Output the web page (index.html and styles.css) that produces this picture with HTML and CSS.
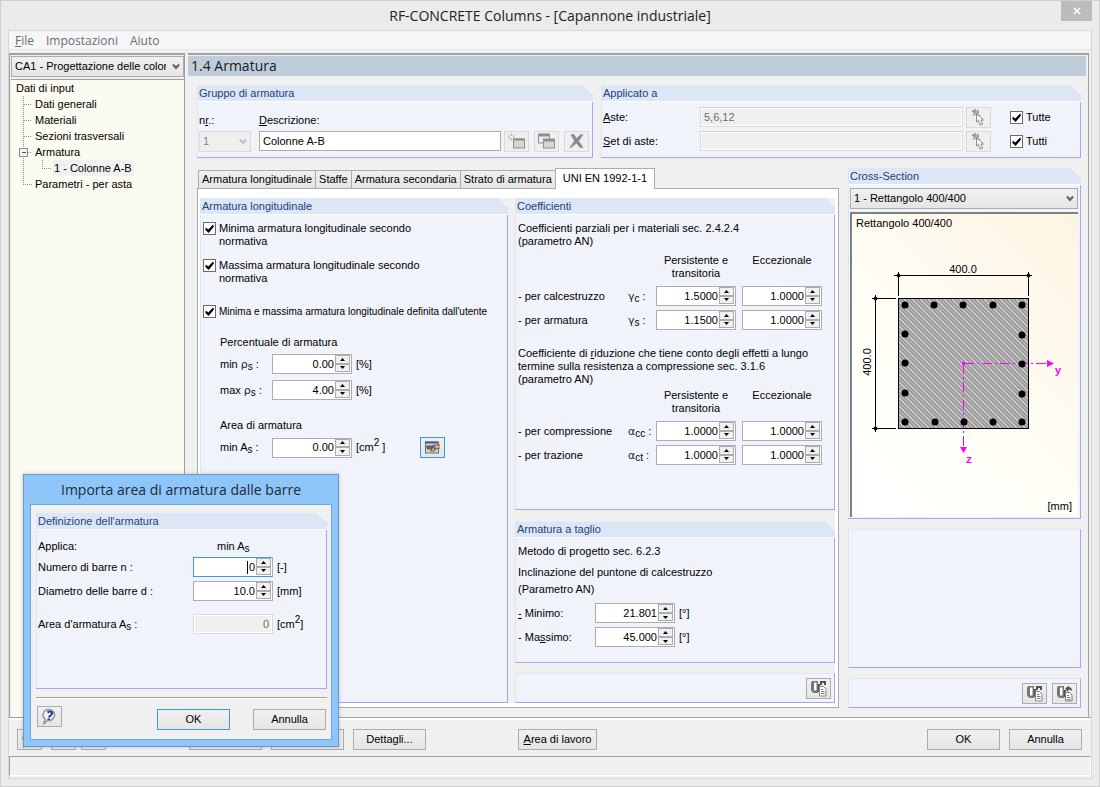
FILE: index.html
```html
<!DOCTYPE html>
<html lang="it">
<head>
<meta charset="utf-8">
<title>RF-CONCRETE Columns</title>
<link rel="stylesheet" href="styles.css">
</head>
<body>
<svg class="defs" aria-hidden="true">
  <symbol id="chevron" viewBox="0 0 8 7"><path d="M1 1.500 4 5l3-3.500" fill="none" stroke="currentColor" stroke-width="2"/></symbol>
  <symbol id="up" viewBox="0 0 5 3"><path d="M0 3 2.500 0 5 3Z"/></symbol>
  <symbol id="down" viewBox="0 0 5 3"><path d="M0 0 2.500 3 5 0Z"/></symbol>
  <symbol id="pick" viewBox="0 0 17 17">
    <path d="M2 2l8 5M3 6l6-3M2 2h7M5 0v6" stroke="#9c9c9c" stroke-width="1.500" fill="none"/>
    <path d="M6.500 4.500v8.500l2-1.500 1.500 4.500 2.500-1-1.500-4h2.500Z" fill="#f4f4f4" stroke="#8c8c8c"/>
  </symbol>
  <symbol id="sheet-import" viewBox="0 0 17 17">
    <path d="M2 1h6v12H4Q1 12 1 9V4Q1 2 2 1Z" fill="#77776f"/>
    <path d="M4 2.500h2.500v8H4Z" fill="#fff"/>
    <path d="M9 12V4M11 5V2h4v3" fill="none" stroke="#55524a" stroke-width="2"/>
    <path d="M9.500 6.500h4l2.500 2.500v7H9.500Z" fill="#fff" stroke="#8a8584"/>
    <path d="M11 9.500h2M11 11.500h3.500M11 13.500h3.500" stroke="#777"/>
  </symbol>
  <symbol id="sheet-export" viewBox="0 0 17 17">
    <path d="M2 1h6v12H4Q1 12 1 9V4Q1 2 2 1Z" fill="#77776f"/>
    <path d="M4 2.500h2.500v8H4Z" fill="#fff"/>
    <path d="M9 12V5" stroke="#55524a" stroke-width="2"/>
    <path d="M9 4l3.500-3.500V2q3.500 0 3.500 4-1-1.500-3.500-1.500V7Z" fill="#55524a"/>
    <path d="M9.500 7.500h4l2.500 2.500v6H9.500Z" fill="#fff" stroke="#8a7477"/>
    <path d="M11 10.500h2M11 12.500h3.500M11 14.500h3.500" stroke="#777"/>
  </symbol>
  <symbol id="help" viewBox="0 0 17 17">
    <path d="M8.500 1.500a6 5.500 0 1 1-2 11L3 15.500l1-4.500A6 5.500 0 0 1 8.500 1.500Z" fill="#eef2f8" stroke="#8d9299" stroke-width="1.500"/>
    <path d="M6.500 4.500q2-1.500 4-.5 1.500 1-.5 3-1.500 1-2 2.500" fill="none" stroke="#2c3a96" stroke-width="2"/>
    <path d="M6.500 10.500h2.500v1.500H6.500Z" fill="#2c3a96"/>
  </symbol>
</svg>

<div class="window">
  <header class="titlebar">
    <h1>RF-CONCRETE Columns - [Capannone industriale]</h1>
    <button class="close" aria-label="Chiudi"><svg viewBox="0 0 8 8"><path d="M1 1l6 6M7 1 1 7" stroke="#fff" stroke-width="1.500"/></svg></button>
  </header>

  <div class="client">
    <nav class="menubar">
      <button><u>F</u>ile</button><button>Impostazioni</button><button>Aiuto</button>
    </nav>

    <div class="panes">
      <aside class="sidebar">
        <div class="select">
          <select aria-label="Caso"><option>CA1 - Progettazione delle colonne</option></select>
          <svg class="chev"><use href="#chevron"/></svg>
        </div>
        <ul class="tree">
          <li><span class="leaf">Dati di input</span></li>
          <li><svg class="branch"><path d="M.5 0V16M.5 8.500H9"/></svg><span class="leaf">Dati generali</span></li>
          <li><svg class="branch"><path d="M.5 0V16M.5 8.500H9"/></svg><span class="leaf">Materiali</span></li>
          <li><svg class="branch"><path d="M.5 0V16M.5 8.500H9"/></svg><span class="leaf">Sezioni trasversali</span></li>
          <li><svg class="branch"><path d="M.5 0V16M.5 8.500H9"/><rect x="-3.500" y="4.500" width="8" height="8" rx="1"/><path class="minus" d="M-1.500 8.500h4"/></svg><span class="leaf">Armatura</span></li>
          <li><svg class="branch deep"><path d="M.5 0V16M19.500 0V8.500H28"/></svg><span class="leaf selected">1 - Colonne A-B</span></li>
          <li><svg class="branch"><path d="M.5 0V8.500H9"/></svg><span class="leaf">Parametri - per asta</span></li>
        </ul>
      </aside>

      <main class="main">
        <h2 class="page-title">1.4 Armatura</h2>
        <div class="content">
          <div class="top">
            <section class="group">
              <h3>Gruppo di armatura</h3>
              <div class="set-form">
                <label for="nr">n<u>r</u>.:</label>
                <label class="desc-label" for="desc"><u>D</u>escrizione:</label>
                <div class="select off set-nr">
                  <select id="nr" disabled><option>1</option></select>
                  <svg class="chev"><use href="#chevron"/></svg>
                </div>
                <input id="desc" class="field" type="text" value="Colonne A-B">
                <div class="set-tools">
                  <button class="tool off" aria-label="Nuovo"><svg viewBox="0 0 17 16"><rect x="5.500" y="5.500" width="11" height="9" fill="#d6d6d6" stroke="#8e8e8e"/><path d="M5 6h12" stroke="#8e8e8e" stroke-width="2"/><path d="M3.500 0v7M0 3.500h7M1 1l5 5M6 1 1 6" stroke="#b0b0b0"/><circle cx="3.500" cy="3.500" r="1.500" fill="#f4f4f4"/></svg></button>
                  <button class="tool off" aria-label="Copia"><svg viewBox="0 0 17 16"><rect x=".5" y="1.500" width="11" height="8" fill="#eee" stroke="#8e8e8e"/><path d="M0 1.500h12" stroke="#8e8e8e" stroke-width="3"/><rect x="5.500" y="6.500" width="11" height="8" fill="#d6d6d6" stroke="#8e8e8e"/><path d="M5 6.500h12" stroke="#8e8e8e" stroke-width="3"/></svg></button>
                  <button class="tool off" aria-label="Elimina"><svg viewBox="0 0 17 16"><path d="M3 1l3 0 2.500 4L13 1h2l-4.500 6.500L15 14h-3L8.500 9.500 3 14H2l4.500-6.500Z" fill="#858585" stroke="#a0a0a0"/></svg></button>
                </div>
              </div>
            </section>

            <section class="group">
              <h3>Applicato a</h3>
              <div class="apply-form">
                <label for="aste"><u>A</u>ste:</label>
                <input id="aste" class="field off" type="text" value="5,6,12" disabled>
                <button class="tool off" aria-label="Seleziona aste"><svg><use href="#pick"/></svg></button>
                <label class="check"><input type="checkbox" checked><span>Tutte</span></label>
                <label for="sets"><u>S</u>et di aste:</label>
                <input id="sets" class="field off" type="text" disabled>
                <button class="tool off" aria-label="Seleziona set di aste"><svg><use href="#pick"/></svg></button>
                <label class="check"><input type="checkbox" checked><span>Tutti</span></label>
              </div>
            </section>
          </div>

          <div class="work">
            <div class="tabs">
              <div class="tablist" role="tablist">
                <button role="tab">Armatura longitudinale</button><button role="tab">Staffe</button><button role="tab">Armatura secondaria</button><button role="tab">Strato di armatura</button><button role="tab" class="active" aria-selected="true">UNI EN 1992-1-1</button>
              </div>
              <div class="tabpage">
                <div class="tabgrid">
                  <section class="group">
                    <h3>Armatura longitudinale</h3>
                    <div class="body">
                      <label class="check narrow"><input type="checkbox" checked><span>Minima armatura longitudinale secondo normativa</span></label>
                      <label class="check narrow second"><input type="checkbox" checked><span>Massima armatura longitudinale secondo normativa</span></label>
                      <label class="check third"><input type="checkbox" checked><span>Minima e massima armatura longitudinale definita dall'utente</span></label>
                      <div class="limits">
                        <p>Percentuale di armatura</p>
                        <div class="row">
                          <label for="minr">min <i>ρ</i><sub>s</sub> :</label>
                          <span class="spin"><input id="minr" type="text" value="0.00"><span class="steps"><button aria-label="Aumenta"><svg><use href="#up"/></svg></button><button aria-label="Riduci"><svg><use href="#down"/></svg></button></span></span>
                          <span>[%]</span>
                        </div>
                        <div class="row">
                          <label for="maxr">max <i>ρ</i><sub>s</sub> :</label>
                          <span class="spin"><input id="maxr" type="text" value="4.00"><span class="steps"><button aria-label="Aumenta"><svg><use href="#up"/></svg></button><button aria-label="Riduci"><svg><use href="#down"/></svg></button></span></span>
                          <span>[%]</span>
                        </div>
                        <p class="area">Area di armatura</p>
                        <div class="row">
                          <label for="mina">min A<sub>s</sub> :</label>
                          <span class="spin"><input id="mina" type="text" value="0.00"><span class="steps"><button aria-label="Aumenta"><svg><use href="#up"/></svg></button><button aria-label="Riduci"><svg><use href="#down"/></svg></button></span></span>
                          <span>[cm<sup>2</sup> ]</span>
                          <button class="tool focus" aria-label="Importa area dalle barre"><svg viewBox="0 0 17 16"><rect x="1.500" y="2.500" width="13" height="11" fill="#d5d3cc" stroke="#6f6f6f"/><path d="M1 3h13" stroke="#3a5fae" stroke-width="2"/><path d="M2 6h6l2-1h6v4l-4 1-2 2H6l1-2H3Z" fill="#6b6259"/><path d="M10 6h6v2l-4 1Z" fill="#d8ad8c"/><circle cx="9" cy="10" r="1" fill="#ddd"/></svg></button>
                        </div>
                      </div>
                    </div>
                  </section>

                  <div class="stack">
                    <section class="group coef">
                      <h3>Coefficienti</h3>
                      <div class="body">
                        <p>Coefficienti parziali per i materiali sec. 2.4.2.4<br>(parametro AN)</p>
                        <div class="matrix">
                          <span class="head first">Persistente e transitoria</span><span class="head">Eccezionale</span>
                          <span>- per calcestruzzo</span><span><i>γ</i><sub>c</sub> :</span>
                          <span class="spin"><input aria-label="Calcestruzzo persistente" type="text" value="1.5000"><span class="steps"><button aria-label="Aumenta"><svg><use href="#up"/></svg></button><button aria-label="Riduci"><svg><use href="#down"/></svg></button></span></span>
                          <span class="spin"><input aria-label="Calcestruzzo eccezionale" type="text" value="1.0000"><span class="steps"><button aria-label="Aumenta"><svg><use href="#up"/></svg></button><button aria-label="Riduci"><svg><use href="#down"/></svg></button></span></span>
                          <span>- per armatura</span><span><i>γ</i><sub>s</sub> :</span>
                          <span class="spin"><input aria-label="Armatura persistente" type="text" value="1.1500"><span class="steps"><button aria-label="Aumenta"><svg><use href="#up"/></svg></button><button aria-label="Riduci"><svg><use href="#down"/></svg></button></span></span>
                          <span class="spin"><input aria-label="Armatura eccezionale" type="text" value="1.0000"><span class="steps"><button aria-label="Aumenta"><svg><use href="#up"/></svg></button><button aria-label="Riduci"><svg><use href="#down"/></svg></button></span></span>
                        </div>
                        <p class="reduction">Coefficiente di <u>r</u>iduzione che tiene conto degli effetti a lungo<br>termine sulla resistenza a compressione sec. 3.1.6<br>(parametro AN)</p>
                        <div class="matrix tight">
                          <span class="head first">Persistente e transitoria</span><span class="head">Eccezionale</span>
                          <span>- per compressione</span><span><i>α</i><sub>cc</sub> :</span>
                          <span class="spin"><input aria-label="Compressione persistente" type="text" value="1.0000"><span class="steps"><button aria-label="Aumenta"><svg><use href="#up"/></svg></button><button aria-label="Riduci"><svg><use href="#down"/></svg></button></span></span>
                          <span class="spin"><input aria-label="Compressione eccezionale" type="text" value="1.0000"><span class="steps"><button aria-label="Aumenta"><svg><use href="#up"/></svg></button><button aria-label="Riduci"><svg><use href="#down"/></svg></button></span></span>
                          <span>- per trazione</span><span><i>α</i><sub>ct</sub> :</span>
                          <span class="spin"><input aria-label="Trazione persistente" type="text" value="1.0000"><span class="steps"><button aria-label="Aumenta"><svg><use href="#up"/></svg></button><button aria-label="Riduci"><svg><use href="#down"/></svg></button></span></span>
                          <span class="spin"><input aria-label="Trazione eccezionale" type="text" value="1.0000"><span class="steps"><button aria-label="Aumenta"><svg><use href="#up"/></svg></button><button aria-label="Riduci"><svg><use href="#down"/></svg></button></span></span>
                        </div>
                      </div>
                    </section>

                    <section class="group shear">
                      <h3>Armatura a taglio</h3>
                      <div class="body">
                        <p>Metodo di progetto sec. 6.2.3</p>
                        <p class="strut">Inclinazione del puntone di calcestruzzo</p>
                        <p class="param">(Parametro AN)</p>
                        <div class="row">
                          <label for="amin"><u>-</u> Minimo:</label>
                          <span class="spin"><input id="amin" type="text" value="21.801"><span class="steps"><button aria-label="Aumenta"><svg><use href="#up"/></svg></button><button aria-label="Riduci"><svg><use href="#down"/></svg></button></span></span>
                          <span>[°]</span>
                        </div>
                        <div class="row">
                          <label for="amax">- Ma<u>s</u>simo:</label>
                          <span class="spin"><input id="amax" type="text" value="45.000"><span class="steps"><button aria-label="Aumenta"><svg><use href="#up"/></svg></button><button aria-label="Riduci"><svg><use href="#down"/></svg></button></span></span>
                          <span>[°]</span>
                        </div>
                      </div>
                    </section>

                    <div class="strip">
                      <button class="tool" aria-label="Imposta valori"><svg><use href="#sheet-import"/></svg></button>
                    </div>
                  </div>
                </div>
              </div>
            </div>

            <div class="side">
              <section class="group section-box">
                <h3>Cross-Section</h3>
                <div class="section-body">
                  <div class="select">
                    <select aria-label="Sezione"><option>1 - Rettangolo 400/400</option></select>
                    <svg class="chev"><use href="#chevron"/></svg>
                  </div>
                  <div class="canvas">
                    <span>Rettangolo 400/400</span>
                    <svg class="drawing" viewBox="1 0 226 270">
                      <defs>
                        <pattern id="hatch" width="8" height="8" patternUnits="userSpaceOnUse">
                          <rect width="8" height="8" fill="#9b9b9b"/>
                          <path d="M-1-1l10 10M-1 7l2 2M7-1l2 2" stroke="#dcdcdc" stroke-width="1.200"/>
                          <path d="M-1 3l6 6M3-1l6 6" stroke="#d0d0d0" stroke-width=".8"/>
                        </pattern>
                      </defs>
                      <rect x="47.500" y="68.500" width="130" height="130" fill="url(#hatch)" stroke="#000"/>
                      <path d="M43 45.500h138M47.500 42v24M177.500 42v24M24.500 65v137M21 68.500h24M21 198.500h24" stroke="#000" fill="none"/>
                      <path d="M45 45.500l2.500-2.500 2.500 2.500-2.500 2.500ZM175 45.500l2.500-2.500 2.500 2.500-2.500 2.500ZM22 68.500l2.500-2.500 2.500 2.500-2.500 2.500ZM22 198.500l2.500-2.500 2.500 2.500-2.500 2.500Z"/>
                      <path class="axis-line" d="M112.500 133.500H200M112.500 133.500V220"/>
                      <path d="M196 130l7 3.500-7 3.500ZM109 217h7l-3.500 6ZM111 132h3v3h-3Z" fill="#f0f"/>
                      <g>
                        <circle cx="54" cy="75" r="3.500"/><circle cx="83" cy="75" r="3.500"/><circle cx="112" cy="75" r="3.500"/><circle cx="142" cy="75" r="3.500"/><circle cx="171" cy="75" r="3.500"/>
                        <circle cx="54" cy="104" r="3.500"/><circle cx="54" cy="133" r="3.500"/><circle cx="54" cy="163" r="3.500"/>
                        <circle cx="171" cy="105" r="3.500"/><circle cx="171" cy="134" r="3.500"/><circle cx="171" cy="164" r="3.500"/>
                        <circle cx="54" cy="192" r="3.500"/><circle cx="84" cy="192" r="3.500"/><circle cx="113" cy="192" r="3.500"/><circle cx="142" cy="192" r="3.500"/><circle cx="171" cy="192" r="3.500"/>
                      </g>
                      <text x="112" y="43" text-anchor="middle">400.0</text>
                      <text transform="translate(20 132) rotate(-90)" text-anchor="middle">400.0</text>
                      <text class="axis" x="207" y="144" text-anchor="middle">y</text>
                      <text class="axis" x="118" y="233" text-anchor="middle">z</text>
                    </svg>
                    <span class="unit">[mm]</span>
                  </div>
                </div>
              </section>
              <div class="strip blank"></div>
              <div class="strip">
                <button class="tool" aria-label="Importa"><svg><use href="#sheet-import"/></svg></button>
                <button class="tool" aria-label="Esporta"><svg><use href="#sheet-export"/></svg></button>
              </div>
            </div>
          </div>
        </div>
      </main>
    </div>

    <footer class="actions">
      <button class="tool" aria-label="Aiuto"><svg><use href="#help"/></svg></button>
      <button class="tool" aria-label="Precedente"></button>
      <button class="tool" aria-label="Successivo"></button>
      <button class="push calc" aria-label="Calcola"></button>
      <button class="push" aria-label="Verifica"></button>
      <button class="push">Dettagli...</button>
      <button class="push area-btn"><u>A</u>rea di lavoro</button>
      <span class="fill"></span>
      <button class="push">OK</button>
      <button class="push">Annulla</button>
    </footer>
    <div class="statusbar"></div>
  </div>

  <div class="dialog" role="dialog" aria-labelledby="dlg-title">
    <h2 id="dlg-title">Importa area di armatura dalle barre</h2>
    <div class="dialog-body">
      <section class="group">
        <h3>Definizione dell'armatura</h3>
        <div class="bars">
          <span>Applica:</span><span class="target">min A<sub>s</sub></span>
          <label class="start" for="num">Numero di barre n :</label>
          <span class="spin focus"><input id="num" type="text" value="0"><span class="steps"><button aria-label="Aumenta"><svg><use href="#up"/></svg></button><button aria-label="Riduci"><svg><use href="#down"/></svg></button></span></span>
          <span class="units">[-]</span>
          <label class="start" for="dia">Diametro delle barre d :</label>
          <span class="spin"><input id="dia" type="text" value="10.0"><span class="steps"><button aria-label="Aumenta"><svg><use href="#up"/></svg></button><button aria-label="Riduci"><svg><use href="#down"/></svg></button></span></span>
          <span class="units">[mm]</span>
          <label class="start result" for="tot">Area d'armatura A<sub>s</sub> :</label>
          <input id="tot" class="field off total result" type="text" value="0" disabled>
          <span class="units result">[cm<sup>2</sup>]</span>
        </div>
      </section>
      <div class="dialog-actions">
        <button class="tool" aria-label="Aiuto"><svg><use href="#help"/></svg></button>
        <span class="fill"></span>
        <button class="push focus">OK</button>
        <button class="push">Annulla</button>
      </div>
    </div>
  </div>
</div>
</body>
</html>
```
FILE: styles.css
```css
* { box-sizing: border-box; }
body {
  margin: 0;
  font: 11px/13px "Liberation Sans", Arial, sans-serif;
  color: #000;
  background: #ebebeb;
}
h1, h2, h3, p, ul { margin: 0; padding: 0; font-weight: normal; }
button, input, select { font: inherit; color: inherit; margin: 0; }
button { padding: 0; }
i { font-family: "DejaVu Sans", sans-serif; font-style: normal; color: #223; }
sub, sup { font-size: 10px; line-height: 0; }
sub { vertical-align: -2px; }
svg { display: block; }
.defs { position: absolute; width: 0; height: 0; }

.window {
  position: relative;
  display: flex;
  flex-direction: column;
  min-height: 100vh;
  padding: 0 7px 7px;
  border: 1px solid #cfcfcf;
  background: #ebebeb;
}
.titlebar {
  display: grid;
  grid-template-columns: 31px 1fr 31px;
  height: 29px;
}
.titlebar h1 {
  grid-column: 2;
  text-align: center;
  font: 14px/29px "Open Sans", sans-serif;
  color: #222;
}
.close {
  display: grid;
  place-items: center;
  height: 20px;
  border: 0;
  background: #bcbcba;
}
.close svg { width: 8px; height: 8px; }

.client {
  flex: 1;
  display: flex;
  flex-direction: column;
  border: 1px solid #d6d6d6;
  background: #f0f0f0;
}
.menubar {
  display: flex;
  gap: 12px;
  height: 19px;
  padding-left: 6px;
  background: #f5f6f7;
  border-bottom: 1px solid #e8e8e8;
}
.menubar button {
  border: 0;
  background: none;
  font: 12px/20px "Open Sans", sans-serif;
  color: #6d6d6d;
}

.panes {
  flex: 1;
  display: flex;
  gap: 3px;
  margin-top: 3px;
  border-bottom: 1px solid #a0a0a0;
  box-shadow: 0 2px #fff;
}
.sidebar {
  display: flex;
  flex-direction: column;
  gap: 2px;
  width: 176px;
  padding: 1px 0 0 1px;
  border: 1px solid #a0a0a0;
  border-bottom: 0;
  border-top-width: 2px;
}
.tree {
  flex: 1;
  list-style: none;
  padding-left: 5px;
  border-top: 1px solid #a0a0a0;
  background: #fcfbf2;
}
.tree li { display: flex; height: 16px; line-height: 16px; }
.branch {
  width: 11px;
  height: 16px;
  margin-left: 7px;
  overflow: visible;
  fill: none;
  stroke: #909090;
  stroke-dasharray: 1 1;
  shape-rendering: crispEdges;
}
.branch.deep { width: 30px; }
.branch rect { fill: #f4f4f4; stroke: #8c8c8c; stroke-dasharray: none; }
.branch .minus { stroke: #3355a5; stroke-dasharray: none; }
.leaf { padding-right: 2px; }
.branch + .leaf { padding-left: 1px; }
.leaf.selected { background: #f0f0f0; }

.select { position: relative; height: 21px; }
.select select {
  display: block;
  width: 100%;
  height: 100%;
  padding: 0 17px 0 3px;
  border: 1px solid #acacac;
  border-radius: 0;
  background: linear-gradient(#f0f0f0, #e5e5e5);
  appearance: none;
  overflow: hidden;
}
.select.off select { color: #838383; background: #efefef; border-color: #d9d9d9; opacity: 1; }
.chev { position: absolute; right: 4px; top: 7px; width: 8px; height: 7px; color: #606060; pointer-events: none; }
.off .chev { color: #bfbfbf; }

.main {
  flex: 1;
  min-width: 0;
  display: flex;
  flex-direction: column;
  margin-right: 2px;
  padding: 1px 2px 0 0;
  border-top: 2px solid #a0a0a0;
  border-right: 1px solid #a0a0a0;
}
.page-title {
  padding-left: 3px;
  font: 14px/20px "Open Sans", sans-serif;
  color: #1a1a22;
  background: #bfcddb;
}
.content {
  flex: 1;
  display: flex;
  flex-direction: column;
  gap: 10px;
  padding: 9px 5px 9px 9px;
}
.top { display: grid; grid-template-columns: 396fr 480fr; gap: 8px; }

.group {
  display: flex;
  flex-direction: column;
  border: solid #a6a6ee;
  border-width: 0 1px 1px 0;
  background: #f0f4fa;
  box-shadow: inset 1px 0 #dce6f5;
  clip-path: polygon(0 0, calc(100% - 10px) 0, 100% 10px, 100% 100%, 0 100%);
}
.group h3 {
  margin-right: -1px;
  clip-path: polygon(0 0, calc(100% - 10px) 0, 100% 10px, 100% 100%, 0 100%);
  padding-left: 2px;
  font: 11px/16px "Liberation Sans", Arial, sans-serif;
  color: #1f3f7a;
  background: #dce6f5;
  border-bottom: 1px solid #fff;
}

.field {
  min-width: 0;
  width: 100%;
  height: 20px;
  padding: 0 3px;
  border: 1px solid #abadb3;
  background: #fff;
}
.field.off { color: #6d6d6d; border-color: #d9d9d9; background: #efefef; box-shadow: inset 0 0 0 1px #fff; }
.tool {
  display: grid;
  place-items: center;
  flex: none;
  width: 25px;
  height: 21px;
  border: 1px solid #acacac;
  background: linear-gradient(#f0f0f0, #e5e5e5);
}
.tool svg { width: 17px; height: 17px; }
.tool.off { border-color: #d9d9d9; background: #efefef; }
.tool.focus, .push.focus { border-color: #3f97ec; }

.set-form {
  display: grid;
  grid-template-columns: 60px 1fr 88px;
  row-gap: 4px;
  padding: 12px 3px 5px 2px;
}
.set-form .desc-label { grid-column: 2 / 4; }
.set-form .set-nr { width: 52px; }
.set-tools { display: flex; justify-content: flex-end; gap: 5px; }
.apply-form {
  display: grid;
  grid-template-columns: 97px 1fr 28px 89px;
  row-gap: 3px;
  align-items: center;
  padding: 5px 0 5px 2px;
}
.apply-form .field { align-self: start; }
.apply-form .tool { margin-left: 3px; }
.apply-form .check { margin-left: 19px; }

.check { display: flex; gap: 3px; }
.check input {
  flex: none;
  display: grid;
  place-items: center;
  width: 13px;
  height: 13px;
  border: 1px solid #6b6b6b;
  background: #fff;
  appearance: none;
}
.check input:checked::before {
  content: "";
  width: 9px;
  height: 9px;
  background: #000;
  clip-path: polygon(8% 38%, 36% 62%, 90% 5%, 100% 28%, 40% 100%, 5% 66%);
}

.work { flex: 1; display: grid; grid-template-columns: minmax(0, 642fr) minmax(0, 233fr); gap: 9px; }
.tabs { display: flex; flex-direction: column; }
.tablist { display: flex; align-items: flex-end; height: 20px; padding-left: 1px; }
.tablist button {
  height: 18px;
  padding: 0 3px;
  border: 1px solid #acacac;
  border-bottom: 0;
  background: linear-gradient(#f0f0f0, #e5e5e5);
  white-space: nowrap;
}
.tablist button + button { margin-left: -1px; }
.tablist .active { position: relative; height: 21px; margin-bottom: -1px; padding: 0 7px 2px; background: #fff; }
.tabpage {
  flex: 1;
  display: flex;
  padding: 9px 3px 4px 2px;
  border: 1px solid #acacac;
  background: #fff;
}
.tabgrid {
  flex: 1;
  display: grid;
  grid-template-columns: minmax(0, 308fr) minmax(0, 320fr);
  gap: 7px;
  background: #f0f0f0;
}
.body { padding: 7px 3px; }
.narrow span { max-width: 220px; }
.second { margin-top: 11px; }
.third { margin-top: 20px; font-size: 10px; white-space: nowrap; }
.limits { margin: 18px 0 0 17px; }
.row { display: grid; grid-template-columns: 48px 80px 60px 25px; column-gap: 4px; align-items: center; margin-top: 5px; height: 20px; }
.limits .row + .row { margin-top: 6px; }
.limits .area { margin-top: 19px; }
.stack { display: flex; flex-direction: column; gap: 11px; }
.stack .strip { margin-top: -1px; }
.coef { flex: 312; }
.shear { flex: 141; }

.spin {
  display: flex;
  width: 80px;
  height: 20px;
  border: 1px solid #abadb3;
  background: #fff;
}
.spin input { flex: 1; min-width: 0; padding: 0 1px; border: 0; outline: 0; background: none; text-align: right; }
.spin.focus { border-color: #3f97ec #abadb3 #3f97ec #3f97ec; }
.spin.focus input { background: linear-gradient(#000, #000) right 8px center / 1px 13px no-repeat; }
.steps { display: grid; grid-template-rows: 1fr 1fr; width: 16px; padding-right: 1px; padding-bottom: 1px; }
.steps button { display: grid; place-items: center; border: 1px solid #acacac; background: #f0f0f0; min-height: 0; }
.steps svg { width: 5px; height: 3px; }

.matrix {
  display: grid;
  grid-template-columns: 110px 28px 80px 80px;
  column-gap: 0;
  row-gap: 4px;
  align-items: center;
  margin-top: 6px;
}
.matrix .spin:nth-of-type(4n+2) { margin-left: 6px; }
.matrix.tight { margin-top: 3px; }
.head { align-self: start; text-align: center; padding: 0 6px 2px; }
.head.first { grid-column: 3; }
.head:not(.first) { margin: 0 -6px 0 6px; padding: 0; }
.reduction { margin-top: 17px; white-space: nowrap; }
.strut { margin-top: 8px; }
.param { margin-top: 4px; }
.shear .row { grid-template-columns: 73px 80px 1fr; margin-top: 4px; }
.shear .param + .row { margin-top: 7px; }

.strip {
  display: flex;
  justify-content: flex-end;
  align-items: center;
  gap: 5px;
  height: 30px;
  padding-right: 3px;
  border: 1px solid #a6a6ee;
  border-top-color: #dce6f5;
  border-left-color: #dce6f5;
  background: #f0f4fa;
}
.side { display: flex; flex-direction: column; gap: 10px; }
.section-box { flex: 348; }
.blank { flex: 142; }
.section-body { flex: 1; display: flex; flex-direction: column; gap: 3px; padding: 3px 2px 1px; }
.canvas {
  flex: 1;
  display: flex;
  flex-direction: column;
  padding-top: 3px;
  border: solid #808080;
  border-width: 2px 0 0 2px;
  background: linear-gradient(225deg, #fdf4e3, #fffdf5 55%, #fff);
}
.canvas span { padding: 0 4px; }
.canvas .unit { margin-top: auto; padding: 0 6px 4px; text-align: right; }
.drawing { width: 100%; }
.drawing text { font: 11px "Liberation Sans", Arial, sans-serif; }
.drawing .axis { font: bold 11px "Liberation Mono", monospace; fill: #f0f; }
.axis-line { stroke: #f0f; stroke-dasharray: 10 3 2 3; fill: none; shape-rendering: crispEdges; }

.actions { display: flex; gap: 9px; padding: 11px 9px 6px 8px; }
.push {
  width: 73px;
  height: 21px;
  border: 1px solid #acacac;
  background: linear-gradient(#f0f0f0, #e5e5e5);
}
.actions .tool + .tool + .tool { margin-left: -4px; }
.actions .calc { margin-left: 74px; }
.actions .area-btn { width: 79px; margin-left: 83px; }
.fill { flex: 1; }
.statusbar { height: 20px; margin-bottom: 2px; border: 1px solid #a0a0a0; border-right-color: #fff; border-bottom-color: #fff; }

.dialog {
  position: absolute;
  left: 22px;
  bottom: 39px;
  width: 316px;
  padding: 0 6px 6px;
  border: 1px solid #6499c8;
  background: #8ec6f9;
  box-shadow: 0 0 4px #0003;
}
.dialog h2 { font: 14px/29px "Open Sans", sans-serif; text-align: center; color: #222b35; }
.dialog-body { padding: 8px 4px 9px 5px; border: 1px solid #6fa6d6; background: #f0f0f0; }
.bars {
  display: grid;
  grid-template-columns: 155px 80px 1fr;
  grid-template-rows: 14px 20px 20px 29px;
  row-gap: 4px;
  align-content: start;
  align-items: center;
  height: 158px;
  padding: 9px 0 0 2px;
}
.start { grid-column: 1; }
.units { padding-left: 4px; }
.result { margin-top: 9px; }
.target { padding-left: 24px; }
.total { text-align: right; }
.dialog-actions {
  display: flex;
  gap: 23px;
  margin-top: 8px;
  padding: 8px 1px 0;
  border-top: 1px solid #a0a0a0;
  box-shadow: inset 0 1px #fff;
}
.dialog-actions .push { margin-top: 3px; }
```
